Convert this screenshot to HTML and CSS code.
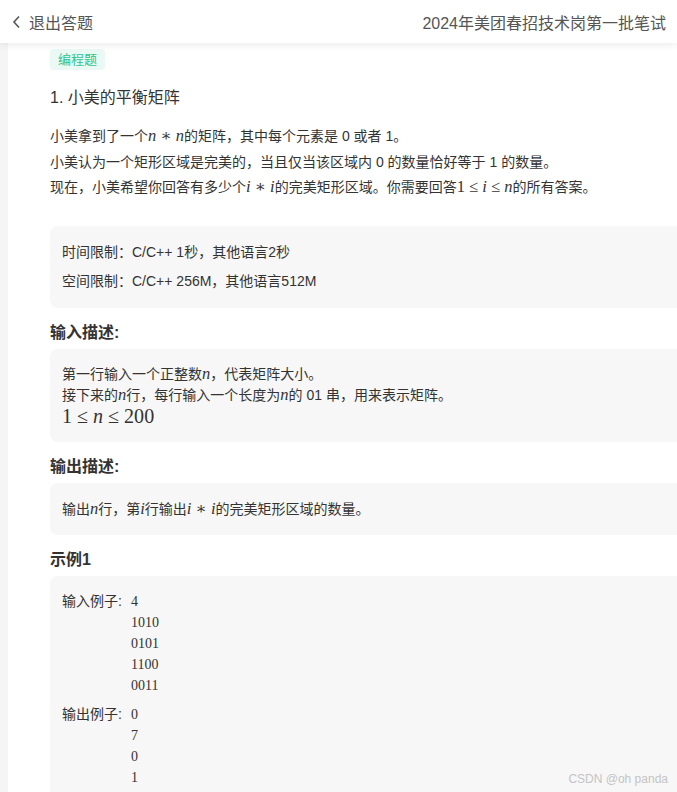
FILE: index.html
```html
<!DOCTYPE html>
<html lang="zh-CN">
<head>
    <meta charset="UTF-8">
    <meta name="viewport" content="width=device-width, initial-scale=1.0">
    <title>2024年美团春招技术岗第一批笔试</title>
    <link rel="stylesheet" href="styles.css">
</head>
<body>
    <div class="header">
        <a class="back" href="javascript:void(0);">
            <svg width="9" height="14" viewBox="0 0 9 14"><polyline points="7,1.5 2,7 7,12.5" fill="none" stroke="#555" stroke-width="1.6"/></svg>
            <span>退出答题</span>
        </a>
        <div class="exam-name">2024年美团春招技术岗第一批笔试</div>
    </div>

    <div class="page">
        <div class="rail"></div>
        <div class="main">
            <span class="tag">编程题</span>
            <div class="title">1. 小美的平衡矩阵</div>

            <div class="desc">
                <p>小美拿到了一个<span class="math"><i>n</i><span class="op">∗</span><i>n</i></span>的矩阵，其中每个元素是 0 或者 1。</p>
                <p>小美认为一个矩形区域是完美的，当且仅当该区域内 0 的数量恰好等于 1 的数量。</p>
                <p>现在，小美希望你回答有多少个<span class="math"><i>i</i><span class="op">∗</span><i>i</i></span>的完美矩形区域。你需要回答<span class="math">1<span class="op">≤</span><i>i</i><span class="op">≤</span><i>n</i></span>的所有答案。</p>
            </div>

            <div class="box limits">
                <p>时间限制：C/C++ 1秒，其他语言2秒</p>
                <p>空间限制：C/C++ 256M，其他语言512M</p>
            </div>

            <h3>输入描述:</h3>
            <div class="box io">
                <p>第一行输入一个正整数<span class="math"><i>n</i></span>，代表矩阵大小。</p>
                <p>接下来的<span class="math"><i>n</i></span>行，每行输入一个长度为<span class="math"><i>n</i></span>的 01 串，用来表示矩阵。</p>
                <p class="big"><span class="math">1<span class="op">≤</span><i>n</i><span class="op">≤</span>200</span></p>
            </div>

            <h3>输出描述:</h3>
            <div class="box io single">
                <p>输出<span class="math"><i>n</i></span>行，第<span class="math"><i>i</i></span>行输出<span class="math"><i>i</i><span class="op">∗</span><i>i</i></span>的完美矩形区域的数量。</p>
            </div>

            <h3>示例1</h3>
            <div class="box sample">
                <div class="row">
                    <span class="label">输入例子:</span>
                    <pre>4
1010
0101
1100
0011</pre>
                </div>
                <div class="row">
                    <span class="label">输出例子:</span>
                    <pre>0
7
0
1</pre>
                </div>
            </div>
        </div>
    </div>

    <div class="watermark">CSDN @oh panda</div>
</body>
</html>
```

FILE: styles.css
```css
html,
body {
    margin: 0;
    height: 100%;
}
body {
    font-family: "Liberation Sans", "Noto Sans CJK SC", sans-serif;
    color: #333;
    background: #fff;
    overflow: hidden;
}
p {
    margin: 0;
}
.header {
    position: relative;
    z-index: 2;
    height: 43px;
    display: flex;
    align-items: center;
    justify-content: space-between;
    padding: 0 11px 0 12px;
    background: #fff;
    box-shadow: 0 2px 8px rgba(0, 0, 0, 0.08);
    font-size: 16px;
    color: #555;
}
.back {
    display: flex;
    align-items: center;
    gap: 8px;
    color: #555;
    text-decoration: none;
}
.page {
    display: flex;
    height: 749px;
}
.rail {
    width: 8px;
    background: #f5f5f5;
}
.main {
    flex: 1;
    padding: 6px 0 0 42px;
    margin-right: -30px;
}
.tag {
    display: inline-block;
    height: 21px;
    line-height: 21px;
    padding: 0 8px;
    border-radius: 4px;
    background: #eaf9f4;
    color: #2fc58f;
    font-size: 13px;
}
.title {
    margin-top: 17px;
    font-size: 16px;
    line-height: 22px;
    color: #333;
}
.desc {
    margin-top: 15px;
    font-size: 14px;
    line-height: 25.5px;
}
.math {
    font-family: "Liberation Serif", "DejaVu Serif", serif;
    font-size: 1.18em;
    line-height: 1;
}
.math i {
    font-style: italic;
}
.op {
    padding: 0 0.25em;
}
.box {
    background: #f7f7f7;
    border-radius: 8px;
    font-size: 14px;
}
.limits {
    margin-top: 25px;
    padding: 16px 12px 17px;
}
.limits p {
    line-height: 20px;
}
.limits p + p {
    margin-top: 9px;
}
h3 {
    margin: 13px 0 4px;
    font-size: 16px;
    line-height: 24px;
    font-weight: bold;
    color: #333;
}
.io {
    padding: 15px 12px 12px;
}
.io p {
    line-height: 21px;
}
.io p.big {
    line-height: 24px;
    font-size: 17px;
}
.io.single {
    padding: 15px 12px;
}
.io.single p {
    line-height: 22px;
}
.sample {
    padding: 15px 12px 20px;
}
.row {
    display: flex;
}
.row + .row {
    margin-top: 8px;
}
.label {
    width: 69px;
    line-height: 21px;
}
.row pre {
    margin: 0;
    font-family: "Liberation Serif", serif;
    font-size: 14px;
    line-height: 21px;
}
.watermark {
    position: absolute;
    right: 9px;
    bottom: 6px;
    font-size: 12px;
    color: #c4c4c4;
}
```
